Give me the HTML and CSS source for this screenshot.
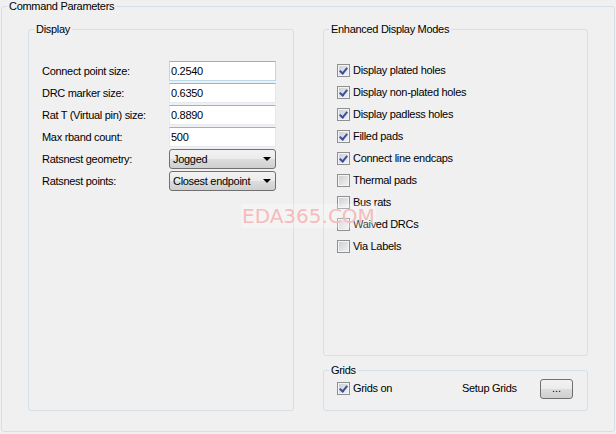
FILE: index.html
```html
<!DOCTYPE html>
<html>
<head>
    <title>Command Parameters</title>
    <link rel="stylesheet" href="styles.css">
</head>
<body>
    <fieldset class="group outer">
        <legend>Command Parameters</legend>
        <div class="columns">
            <fieldset class="group display">
                <legend>Display</legend>
                <div class="form">
                    <div class="row"><label>Connect point size:</label><input class="text focus" value="0.2540"></div>
                    <div class="row"><label>DRC marker size:</label><input class="text" value="0.6350"></div>
                    <div class="row"><label>Rat T (Virtual pin) size:</label><input class="text" value="0.8890"></div>
                    <div class="row"><label>Max rband count:</label><input class="text" value="500"></div>
                    <div class="row"><label>Ratsnest geometry:</label><div class="combo"><span>Jogged</span><span class="arrow"></span></div></div>
                    <div class="row"><label>Ratsnest points:</label><div class="combo"><span>Closest endpoint</span><span class="arrow"></span></div></div>
                </div>
            </fieldset>
            <div class="right">
                <fieldset class="group modes">
                    <legend>Enhanced Display Modes</legend>
                    <div class="checks">
                        <div class="check on"><span class="box"></span>Display plated holes</div>
                        <div class="check on"><span class="box"></span>Display non-plated holes</div>
                        <div class="check on"><span class="box"></span>Display padless holes</div>
                        <div class="check on"><span class="box"></span>Filled pads</div>
                        <div class="check on"><span class="box"></span>Connect line endcaps</div>
                        <div class="check"><span class="box"></span>Thermal pads</div>
                        <div class="check"><span class="box"></span>Bus rats</div>
                        <div class="check"><span class="box"></span>Waived DRCs</div>
                        <div class="check"><span class="box"></span>Via Labels</div>
                    </div>
                </fieldset>
                <fieldset class="group grids">
                    <legend>Grids</legend>
                    <div class="grid-row">
                        <div class="check on"><span class="box"></span>Grids on</div>
                        <span class="setup">Setup Grids</span>
                        <button class="dots">...</button>
                    </div>
                </fieldset>
            </div>
        </div>
    </fieldset>
    <div class="watermark">EDA365.COM</div>
</body>
</html>
```

FILE: styles.css
```css
* {
    box-sizing: border-box;
}

body {
    margin: 0;
    width: 616px;
    height: 434px;
    overflow: hidden;
    background: #f0f0f0;
    font: 11px "Liberation Sans", Arial, sans-serif;
    letter-spacing: -0.3px;
    color: #000;
}

.group {
    margin: 0;
    padding: 0;
    min-width: 0;
    border: 1px solid #d5dfe5;
    border-radius: 3px;
}

.group legend {
    margin-left: 5px;
    padding: 0 2px;
    height: 13px;
    line-height: 13px;
}

.outer {
    margin: 0 1px;
    height: 432px;
}

.columns {
    display: flex;
    gap: 29px;
    padding: 10px 0 0 26px;
}

.display {
    width: 266px;
    height: 388px;
}

.right {
    display: flex;
    flex-direction: column;
    gap: 8px;
    width: 265px;
}

.modes {
    height: 333px;
}

.grids {
    height: 47px;
}

/* display form */
.form {
    display: flex;
    flex-direction: column;
    gap: 2px;
    padding: 25px 0 0 13px;
}

.row {
    display: flex;
    align-items: center;
    height: 20px;
}

.row label {
    width: 127px;
}

.text {
    width: 107px;
    height: 20px;
    margin: 0;
    padding: 0 1px;
    border: 1px solid;
    border-color: #abadb3 #e3e9ef #e3e9ef #e3e9ef;
    background: #fff;
    font: inherit;
    letter-spacing: inherit;
    color: #000;
    outline: none;
}

.text.focus {
    border-color: #7eb4ea #b7d9ed #b7d9ed #b7d9ed;
}

.combo {
    display: flex;
    align-items: center;
    justify-content: space-between;
    width: 107px;
    height: 20px;
    padding: 0 4px 0 3px;
    border: 1px solid #707070;
    border-radius: 3px;
    background: linear-gradient(#f2f2f2, #ebebeb 50%, #dddddd 51%, #cfcfcf);
}

.arrow {
    width: 0;
    height: 0;
    border-left: 4px solid transparent;
    border-right: 4px solid transparent;
    border-top: 4px solid #000;
}

/* checkboxes */
.checks {
    padding: 23px 0 0 13px;
}

.check {
    display: flex;
    align-items: center;
    height: 22px;
}

.box {
    position: relative;
    width: 13px;
    height: 13px;
    margin-right: 3px;
    border: 1px solid #8e8f8f;
    background: linear-gradient(135deg, #c9ccd1, #f4f4f4);
    box-shadow: inset 0 0 0 1px #f4f4f4;
}

.check.on .box::after {
    content: '';
    position: absolute;
    left: 3px;
    top: 1px;
    width: 3px;
    height: 6px;
    border: solid #3b4f99;
    border-width: 0 2px 2px 0;
    transform: rotate(40deg);
}

.grid-row {
    display: flex;
    align-items: center;
    height: 22px;
    padding-left: 13px;
}

.grid-row .check {
    width: 125px;
}

.setup {
    width: 78px;
}

.dots {
    width: 33px;
    height: 20px;
    margin: 2px 0 0;
    padding: 0 0 2px;
    border: 1px solid #707070;
    border-radius: 3px;
    background: linear-gradient(#f2f2f2, #ebebeb 50%, #dddddd 51%, #cfcfcf);
    font: inherit;
    color: #000;
}

.watermark {
    position: absolute;
    left: 241px;
    top: 204px;
    padding: 0 1px;
    background: rgba(255, 255, 255, 0.25);
    font: 20px "DejaVu Sans", sans-serif;
    letter-spacing: 0;
    color: #f4bcbc;
}
```
